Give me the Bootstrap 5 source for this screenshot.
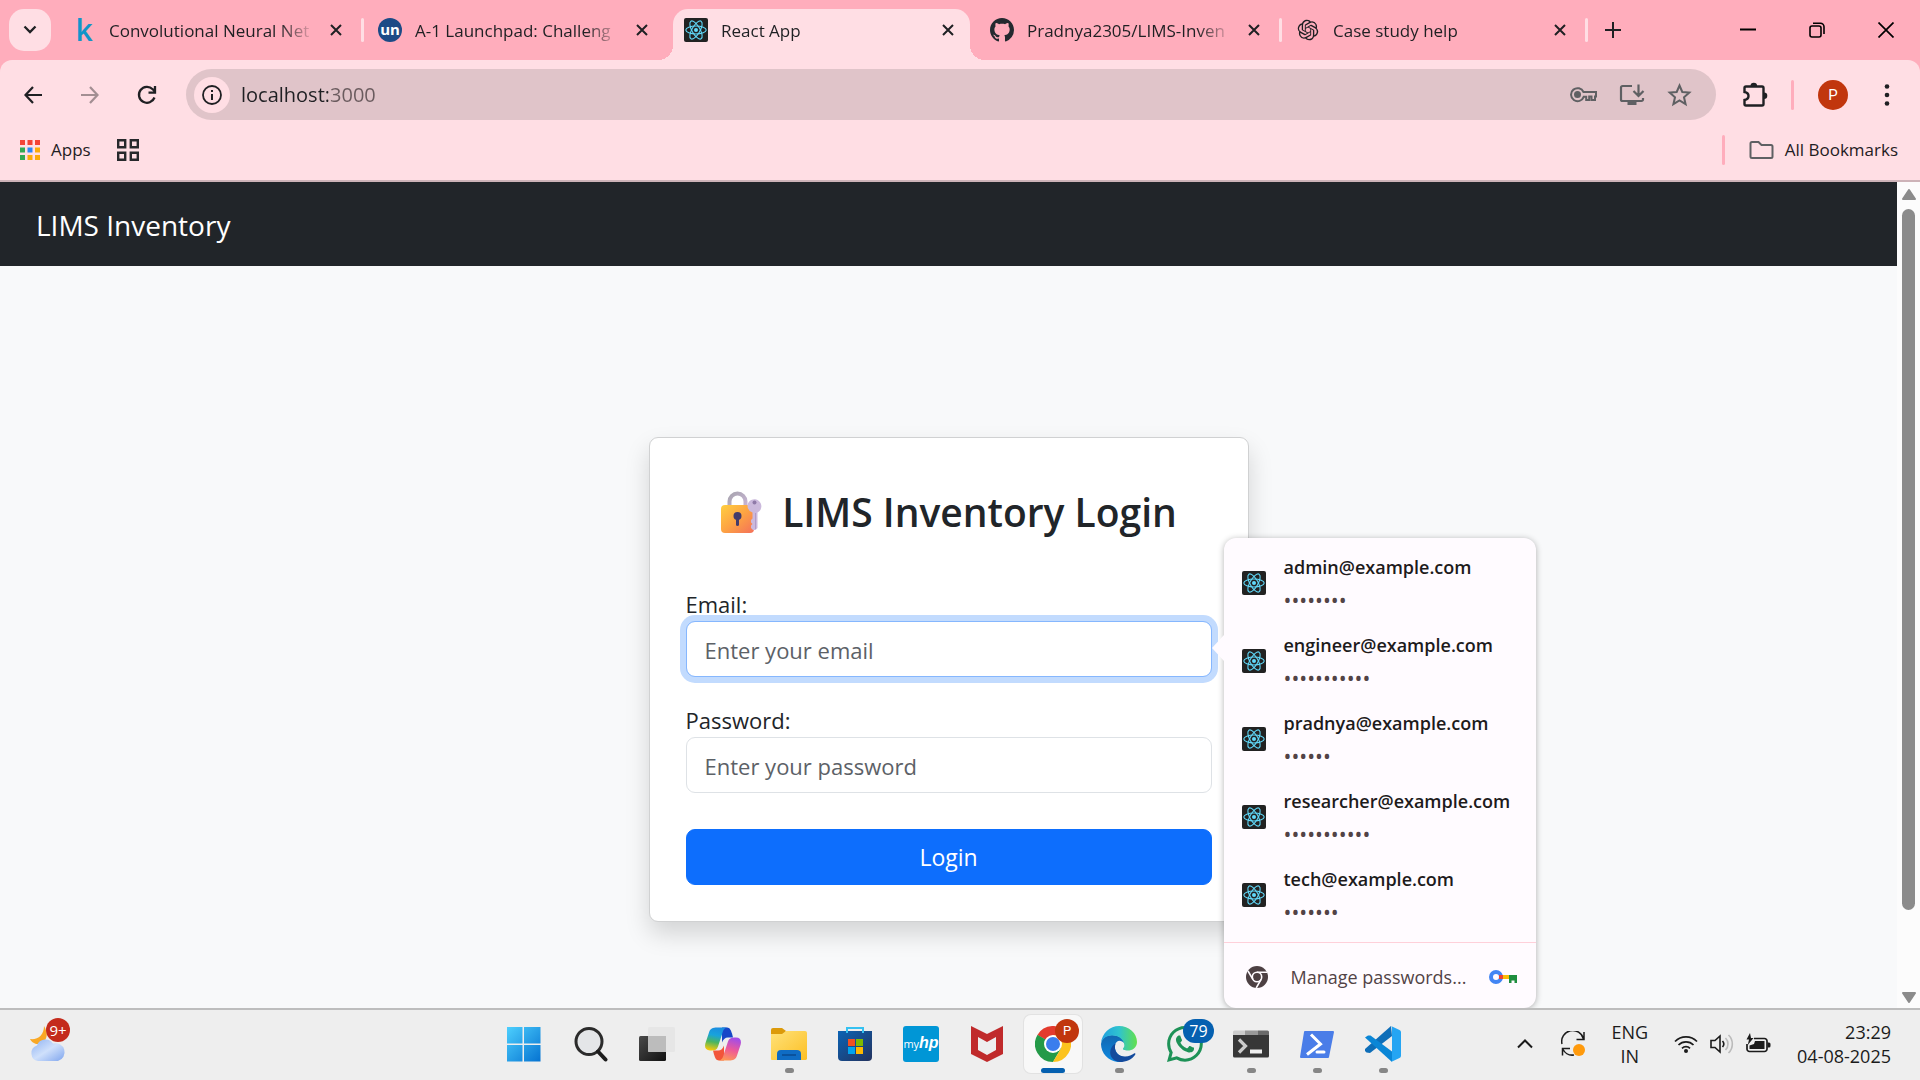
<!DOCTYPE html>
<html lang="en">
<head>
<meta charset="utf-8">
<meta name="viewport" content="width=device-width, initial-scale=1">
<title>React App</title>
<link href="https://cdn.jsdelivr.net/npm/bootstrap@5.3.0/dist/css/bootstrap.min.css" rel="stylesheet">
<style>
  :root { --strip:#ffadbc; --bar:#ffdee4; --omni:#e0c4c9; --ink:#1f2023; }
  body { font-family:"Open Sans","Noto Sans",sans-serif; font-size:17px; line-height:24px; color:var(--ink); }
  svg { display:block; flex:none; }
  .plain { border:0; background:none; padding:0; color:inherit; display:flex; align-items:center; justify-content:center; flex:none; }
  .screen { height:100vh; overflow:hidden; }

  /* tab strip */
  .strip { background:var(--strip); height:60px; }
  .tab-list-btn { width:42px; height:42px; border-radius:15px; background:var(--bar); margin:9px 6px 9px 9px; }
  .tab-slot { width:306px; padding:0 15px; gap:13px; position:relative; }
  .tab-slot > * { position:relative; z-index:1; }
  .tab-slot.ruled::after { content:""; position:absolute; right:-1px; top:18px; width:3px; height:24px; background:var(--bar); border-radius:2px; }
  .tab-title { width:202px; white-space:nowrap; color:inherit; text-decoration:none; padding-top:2px;
    -webkit-mask-image:linear-gradient(90deg,#000 170px,transparent 206px); mask-image:linear-gradient(90deg,#000 170px,transparent 206px); }
  .fav { width:24px; height:24px; flex:none; }
  .fav-k { color:#1295c9; font:600 30px/24px "Open Sans",sans-serif; text-align:center; }
  .fav-un { background:#1c4a86; color:#fff; border-radius:50%; font:700 15px/22px "Open Sans",sans-serif; text-align:center; }
  .tab-face { position:absolute !important; z-index:0 !important; left:4px; right:5px; top:9px; bottom:0; background:var(--bar); border-radius:15px 15px 0 0; }
  .tab-face::before, .tab-face::after { content:""; position:absolute; bottom:0; width:15px; height:15px; }
  .tab-face::before { left:-15px; background:radial-gradient(circle at 0 0,transparent 15px,var(--bar) 15px); }
  .tab-face::after { right:-15px; background:radial-gradient(circle at 100% 0,transparent 15px,var(--bar) 15px); }
  .tab-slot .plain { margin-left:2px; width:24px; height:24px; }
  .win-btn { width:69px; height:60px; }

  /* toolbar and bookmarks */
  .under { background:var(--strip); }
  .tools { background:var(--bar); border-radius:12px 12px 0 0; padding:9px 15px 0; gap:21px; }
  .tool { width:36px; height:36px; }
  .tool-s { width:30px; height:30px; }
  .omnibox { background:var(--omni); border-radius:26px; height:51px; padding:0 23px 0 8px; gap:21px; margin-right:3px; }
  .site-info { width:36px; height:36px; border-radius:50%; background:var(--bar); }
  .url { border:0; outline:0; padding:0; margin-left:-10px; font-size:20px; line-height:30px; min-width:0;
    -webkit-text-fill-color:transparent; background:linear-gradient(90deg,#1f2023 87px,#6a5b5e 87px); -webkit-background-clip:text; background-clip:text; }
  .rule { width:3px; height:30px; border-radius:2px; background:var(--strip); margin:0 3px 0 0; }
  .avatar { width:30px; height:36px; border-radius:50%; }
  .avatar span { width:30px; height:30px; border-radius:50%; background:#c1360d; color:#fff; font:15px/30px Roboto,sans-serif; }
  .marks { background:var(--bar); height:62px; border-bottom:2px solid #cdb3b8; padding:0 22px 0 20px; }
  .marks a { color:inherit; text-decoration:none; gap:11px; }
  .marks .groups { margin-left:26px; }

  /* page */
  .page-bg { background:#f8f9fa; }
  .site-nav { height:84px; padding:0 36px; }
  .site-nav .navbar-brand { font-size:28px; line-height:45px; padding:2px 0 0; margin:0; }
  .stage { padding-top:171px; }
  .login-card { width:600px; border-color:#d0d1d2; border-radius:9px; box-shadow:0 12px 24px rgba(0,0,0,.15); }
  .login-card .card-body { padding:36px; }
  .login-title { font-size:39px; line-height:51px; font-weight:600; margin:12px 0 48px; gap:20px; color:#212529; }
  .login-card label { font-size:22px; line-height:36px; display:block; color:#212529; padding-top:1px; height:36px; }
  .field { position:relative; margin-bottom:24px; }
  .field .form-control { height:56px; font-size:22px; line-height:36px; padding:10px 18px 8px; border-radius:9px; }
  .field .form-control::placeholder { color:#5c6167; }
  .form-control.is-focused { border-color:#86b7fe; box-shadow:0 0 0 6px #c2dbfe; }
  .login-btn { height:56px; font-size:23px; border-radius:9px; margin-top:12px; background:#0d6efd; }

  /* saved password menu */
  .saved { position:absolute; left:calc(100% + 12px); top:-47px; width:312px; height:470px; background:#fffbff; border-radius:12px; z-index:5; box-shadow:0 1px 6px rgba(0,0,0,.3); padding-top:6px; }
  .saved::before { content:""; position:absolute; left:-12px; top:97px; border:13px solid transparent; border-left:0; border-right:12px solid #fffbff; }
  .saved-item { height:78px; padding:0 18px; gap:18px; width:100%; justify-content:flex-start; text-align:left; }
  .saved-item b { font-weight:600; font-size:18px; line-height:30px; display:block; color:#201a1b; }
  .saved-item span { display:block; font:21px/32px "Open Sans",sans-serif; color:#524346; padding-top:2px; height:32px; }
  .saved-foot { border-top:1px solid #ffd0da; height:66px; margin-top:8px; padding:2px 19px 0 22px; width:100%; font-size:18px; color:#524346; }
  .saved-foot .plain { gap:23px; }

  /* scrollbar */
  .sbar { width:23px; background:#fcfcfc; padding:7px 5px 5px; gap:9px; }
  .thumb { width:13px; background:#8b8b8b; border-radius:7px; height:701px; }

  /* taskbar */
  .taskbar { height:72px; background:#eee; border-top:2px solid #bdbdbd; display:grid; grid-template-columns:1fr auto 1fr; align-items:center; padding:0 12px 2px 0; color:#1b1b1b; }
  .task { position:relative; width:58px; height:58px; margin:0 4px; border-radius:7px; }
  .task.open::after { content:""; position:absolute; bottom:0; left:25px; width:9px; height:5px; border-radius:3px; background:#868686; }
  .task.current { background:#f8f8f8; box-shadow:0 0 0 1px #e2e2e2; }
  .task.current::after { left:17px; width:24px; background:#0560b0; }
  .pip { position:absolute; display:block; height:24px; border-radius:12px; color:#fff; text-align:center; font-size:15px; line-height:24px; }
  .pip-chrome { left:31px; top:4px; width:24px; background:#c1360d; font-family:Roboto,sans-serif; font-size:13px; }
  .pip-chat { left:27px; top:4px; width:31px; background:#0560b0; font-size:16px; }
  .pip-news { left:18px; top:-8px; width:24px; background:#c42b1c; }
  .weather { position:relative; margin-left:28px; width:42px; height:36px; }
  .hp-tile { width:36px; height:36px; border-radius:3px; background:#0096d6; color:#fff; font:11px/34px "Open Sans",sans-serif; }
  .hp-tile b { font:italic 700 16px/34px "Liberation Sans",sans-serif; }
  .tray { gap:26px; padding-right:17px; font-size:18px; line-height:24px; }
  .tray-icons { gap:12px; }
</style>
<script src="https://cdn.jsdelivr.net/npm/bootstrap@5.3.0/dist/js/bootstrap.bundle.min.js"></script>
</head>
<body>
<svg width="0" height="0" class="position-absolute" aria-hidden="true">
  <symbol id="react" viewBox="0 0 24 24"><rect width="24" height="24" rx="2" fill="#222"/><g fill="none" stroke="#61dafb" stroke-width="1.1"><ellipse cx="12" cy="12" rx="10.2" ry="4"/><ellipse cx="12" cy="12" rx="10.2" ry="4" transform="rotate(60 12 12)"/><ellipse cx="12" cy="12" rx="10.2" ry="4" transform="rotate(120 12 12)"/></g><circle cx="12" cy="12" r="2" fill="#61dafb"/></symbol>
  <symbol id="cross" viewBox="0 0 12 12"><path d="M1 1l10 10M11 1L1 11" stroke="currentColor" stroke-width="2" fill="none"/></symbol>
  <linearGradient id="gWin" x1="0" y1="0" x2="36" y2="36" gradientUnits="userSpaceOnUse"><stop stop-color="#4fd2ff"/><stop offset="1" stop-color="#0370d0"/></linearGradient>
</svg>

<div class="screen d-flex flex-column">
  <header class="flex-shrink-0">
    <div class="strip d-flex">
      <button class="plain tab-list-btn" aria-label="Search tabs"><svg width="14" height="10" viewBox="0 0 14 10"><path d="M1.5 1.500l5.500 5.500 5.500-5.500" fill="none" stroke="currentColor" stroke-width="2.300"/></svg></button>
      <div class="tab-slot d-flex align-items-center ruled"><span class="fav fav-k">k</span><a href="#" class="tab-title">Convolutional Neural Net</a><button class="plain" aria-label="Close tab"><svg width="12" height="12"><use href="#cross"/></svg></button></div>
      <div class="tab-slot d-flex align-items-center"><span class="fav fav-un">un</span><a href="#" class="tab-title">A-1 Launchpad: Challeng</a><button class="plain" aria-label="Close tab"><svg width="12" height="12"><use href="#cross"/></svg></button></div>
      <div class="tab-slot d-flex align-items-center"><i class="tab-face"></i><svg class="fav"><use href="#react"/></svg><a href="#" class="tab-title">React App</a><button class="plain" aria-label="Close tab"><svg width="12" height="12"><use href="#cross"/></svg></button></div>
      <div class="tab-slot d-flex align-items-center ruled"><svg class="fav" viewBox="0 0 16 16"><path fill="#24292f" d="M8 0C3.580 0 0 3.580 0 8c0 3.540 2.290 6.530 5.470 7.590.4.070.55-.17.55-.38 0-.19-.01-.82-.01-1.490-2.010.37-2.530-.49-2.690-.94-.09-.23-.48-.94-.82-1.130-.28-.15-.68-.52-.01-.53.63-.01 1.080.58 1.230.82.72 1.210 1.870.87 2.330.66.070-.52.28-.87.51-1.070-1.780-.2-3.640-.89-3.640-3.950 0-.87.31-1.590.82-2.150-.08-.2-.36-1.020.08-2.120 0 0 .67-.21 2.200.82.64-.18 1.320-.27 2-.27s1.360.09 2 .27c1.530-1.040 2.200-.82 2.200-.82.44 1.100.16 1.920.08 2.120.51.56.82 1.270.82 2.150 0 3.070-1.870 3.750-3.650 3.950.29.25.54.73.54 1.480 0 1.070-.01 1.930-.01 2.200 0 .21.15.46.55.38A8.010 8.010 0 0 0 16 8c0-4.420-3.580-8-8-8"/></svg><a href="#" class="tab-title">Pradnya2305/LIMS-Inven</a><button class="plain" aria-label="Close tab"><svg width="12" height="12"><use href="#cross"/></svg></button></div>
      <div class="tab-slot d-flex align-items-center ruled"><svg class="fav" viewBox="-2 -2 28 28"><path fill="#1f2023" d="M22.2819 9.8211a5.9847 5.9847 0 0 0-.5157-4.9108 6.0462 6.0462 0 0 0-6.5098-2.9A6.0651 6.0651 0 0 0 4.9807 4.1818a5.9847 5.9847 0 0 0-3.9977 2.9 6.0462 6.0462 0 0 0 .7427 7.0966 5.98 5.98 0 0 0 .511 4.9107 6.051 6.051 0 0 0 6.5146 2.9001A5.9847 5.9847 0 0 0 13.2599 24a6.0557 6.0557 0 0 0 5.7718-4.2058 5.9894 5.9894 0 0 0 3.9977-2.9001 6.0557 6.0557 0 0 0-.7475-7.0729zm-9.022 12.6081a4.4755 4.4755 0 0 1-2.8764-1.0408l.1419-.0804 4.7783-2.7582a.7948.7948 0 0 0 .3927-.6813v-6.7369l2.02 1.1686a.071.071 0 0 1 .038.052v5.5826a4.504 4.504 0 0 1-4.4945 4.4944zm-9.6607-4.1254a4.4708 4.4708 0 0 1-.5346-3.0137l.142.0852 4.783 2.7582a.7712.7712 0 0 0 .7806 0l5.8428-3.3685v2.3324a.0804.0804 0 0 1-.0332.0615L9.74 19.9502a4.4992 4.4992 0 0 1-6.1408-1.6464zM2.3408 7.8956a4.485 4.485 0 0 1 2.3655-1.9728V11.6a.7664.7664 0 0 0 .3879.6765l5.8144 3.3543-2.0201 1.1685a.0757.0757 0 0 1-.071 0l-4.8303-2.7865A4.504 4.504 0 0 1 2.3408 7.872zm16.5963 3.8558L13.1038 8.364 15.1192 7.2a.0757.0757 0 0 1 .071 0l4.8303 2.7913a4.4944 4.4944 0 0 1-.6765 8.1042v-5.6772a.79.79 0 0 0-.407-.667zm2.0107-3.0231l-.142-.0852-4.7735-2.7818a.7759.7759 0 0 0-.7854 0L9.409 9.2297V6.8974a.0662.0662 0 0 1 .0284-.0615l4.8303-2.7866a4.4992 4.4992 0 0 1 6.6802 4.66zM8.3065 12.863l-2.02-1.1638a.0804.0804 0 0 1-.038-.0567V6.0742a4.4992 4.4992 0 0 1 7.3757-3.4537l-.142.0805L8.704 5.459a.7948.7948 0 0 0-.3927.6813zm1.0976-2.3654l2.602-1.4998 2.6069 1.4998v2.9994l-2.5974 1.4997-2.6067-1.4997Z"/></svg><a href="#" class="tab-title">Case study help</a><button class="plain" aria-label="Close tab"><svg width="12" height="12"><use href="#cross"/></svg></button></div>
      <button class="plain px-3" aria-label="New tab"><svg width="20" height="16" viewBox="0 0 20 16"><path d="M10 0v16M2 8h16" stroke="currentColor" stroke-width="2"/></svg></button>
      <div class="d-flex ms-auto text-black">
        <button class="plain win-btn" aria-label="Minimise"><svg width="16" height="16" viewBox="0 0 16 16"><path d="M0 7.500h16" stroke="currentColor" stroke-width="2"/></svg></button>
        <button class="plain win-btn" aria-label="Restore"><svg width="16" height="16" viewBox="0 0 16 16" fill="none" stroke="currentColor" stroke-width="1.600"><rect x="1" y="4" width="11" height="11" rx="2"/><path d="M4 1.200h7.500a3.500 3.500 0 0 1 3.500 3.500V12"/></svg></button>
        <button class="plain win-btn" aria-label="Close"><svg width="16" height="16" viewBox="0 0 16 16"><path d="M.5.5l15 15M15.500.5l-15 15" stroke="currentColor" stroke-width="1.700"/></svg></button>
      </div>
    </div>

    <div class="under">
      <div class="tools d-flex align-items-center">
        <button class="plain tool" aria-label="Back"><svg width="18" height="18" viewBox="0 0 18 18" fill="none" stroke="currentColor" stroke-width="2.200"><path d="M18 9H1.500M9 1L1.500 9 9 17"/></svg></button>
        <button class="plain tool" aria-label="Forward"><svg width="18" height="18" viewBox="0 0 18 18" fill="none" stroke="#a38e92" stroke-width="2.200"><path d="M0 9h16.500M9 1l7.500 8L9 17"/></svg></button>
        <button class="plain tool" aria-label="Reload"><svg width="20" height="20" viewBox="0 0 20 20" fill="none" stroke="currentColor" stroke-width="2.300"><path d="M17.500 12.500A8 8 0 1 1 15.700 4.200L18 6.500M18 1v6.700h-6.500"/></svg></button>
        <div class="omnibox d-flex align-items-center flex-grow-1">
          <button class="plain site-info" aria-label="Site information"><svg width="20" height="20" viewBox="0 0 20 20"><circle cx="10" cy="10" r="9" fill="none" stroke="currentColor" stroke-width="1.800"/><path d="M10 9v6M10 5v2" stroke="currentColor" stroke-width="2"/></svg></button>
          <input class="url flex-grow-1" type="text" value="localhost:3000" aria-label="Address">
          <button class="plain" aria-label="Passwords"><svg width="27" height="20" viewBox="0 0 27 20" fill="none" stroke="#5f6063" stroke-width="2"><path d="M13.500 7H26v4.500h-1V15h-3.500v-3.500h-2.300V15h-3v-3.200H13.700A6.500 6.500 0 1 1 13.500 7z"/><circle cx="7.500" cy="9.500" r="2.500" fill="#5f6063"/></svg></button>
          <button class="plain" aria-label="Install app"><svg width="27" height="24" viewBox="0 0 27 24" fill="none" stroke="#5f6063" stroke-width="2.200"><path d="M14 3H4.500A1.500 1.500 0 0 0 3 4.500v12A1.500 1.500 0 0 0 4.500 18h19a1.500 1.500 0 0 0 1.500-1.500V15M20.500 1.500V13M15.500 8l5 5 5-5"/><path d="M9.500 18h9v4h-9z" fill="#5f6063" stroke="none"/></svg></button>
          <button class="plain" aria-label="Bookmark this tab"><svg width="27" height="24" viewBox="0 0 27 24"><path d="M13.500 2.500l2.800 6.500 7 .6-5.300 4.700 1.600 6.900-6.100-3.700-6.100 3.700L9 14.300 3.700 9.600l7-.6z" fill="none" stroke="#5f6063" stroke-width="2"/></svg></button>
        </div>
        <button class="plain tool-s" aria-label="Extensions"><svg width="28" height="28" viewBox="0 0 28 28"><path d="M5.500 5.500H21a1.500 1.500 0 0 1 1.500 1.500v16a1.500 1.500 0 0 1-1.500 1.500H5A1.500 1.500 0 0 1 3.500 23v-4c3-.5 4-2.200 4-4s-1-3.500-4-4V7A1.500 1.500 0 0 1 5 5.500z" fill="none" stroke="currentColor" stroke-width="2.400"/><path d="M9.500 5a3.300 3.300 0 0 1 6.600 0zM23 11.500a3.300 3.300 0 0 1 0 6.600z" fill="currentColor"/></svg></button>
        <span class="rule"></span>
        <button class="plain avatar" aria-label="Profile"><span>P</span></button>
        <button class="plain tool" aria-label="Menu"><svg width="6" height="22" viewBox="0 0 6 22" fill="currentColor"><circle cx="3" cy="2.500" r="2.300"/><circle cx="3" cy="11" r="2.300"/><circle cx="3" cy="19.500" r="2.300"/></svg></button>
      </div>
      <nav class="marks d-flex align-items-center">
        <a href="#" class="d-flex align-items-center"><svg width="20" height="20" viewBox="0 0 20 20"><g fill="#f44336"><path d="M0 0h5v5H0zM7.500 0h5v5h-5zM15 0h5v5h-5z"/></g><g fill="#34a853"><path d="M0 7.500h5v5H0zM0 15h5v5H0z"/></g><path fill="#2b87f5" d="M7.500 7.500h5v5h-5z"/><path fill="#fbab08" d="M15 7.500h5v5h-5zM7.500 15h5v5h-5zM15 15h5v5h-5z"/></svg>Apps</a>
        <a href="#" class="groups" aria-label="Tab groups"><svg width="22" height="22" viewBox="0 0 22 22" fill="none" stroke="#27282b" stroke-width="2.400"><path d="M1.200 1.200h7v7h-7zM13.800 1.200h7v7h-7zM1.200 13.800h7v7h-7zM13.800 13.800h7v7h-7z"/></svg></a>
        <span class="rule ms-auto me-4"></span>
        <a href="#" class="d-flex align-items-center"><svg width="25" height="20" viewBox="0 0 25 20"><path d="M3 2h6.500l3 3H22a1.500 1.500 0 0 1 1.500 1.500v10A1.500 1.500 0 0 1 22 18H3a1.500 1.500 0 0 1-1.500-1.500v-13A1.500 1.500 0 0 1 3 2z" fill="none" stroke="#5f6063" stroke-width="2"/></svg>All Bookmarks</a>
      </nav>
    </div>
  </header>

  <div class="d-flex flex-grow-1 overflow-hidden page-bg">
    <div class="flex-grow-1">
      <nav class="navbar navbar-dark bg-dark site-nav"><a class="navbar-brand" href="#">LIMS Inventory</a></nav>
      <main class="stage d-flex justify-content-center">
        <div class="card login-card">
          <form class="card-body">
            <h3 class="login-title d-flex justify-content-center align-items-center">
              <svg width="42" height="42" viewBox="0 0 42 42" role="img" aria-label="Locked with key">
                <defs><linearGradient id="gLock" x1="0" y1="0" x2="1" y2="1"><stop stop-color="#ffcf3f"/><stop offset=".5" stop-color="#fda343"/><stop offset="1" stop-color="#f4705a"/></linearGradient><linearGradient id="gShk" x1="0" y1="0" x2="1" y2="1"><stop stop-color="#a9a5b0"/><stop offset="1" stop-color="#c9b5d6"/></linearGradient></defs>
                <path d="M9.500 17v-6.500a8 8 0 0 1 16 0V17" fill="none" stroke="url(#gShk)" stroke-width="4"/>
                <rect x="1" y="14" width="33" height="28" rx="4" fill="url(#gLock)"/>
                <circle cx="17.500" cy="25" r="4" fill="#433b6b"/><path d="M16 26h3v7.500a1.500 1.500 0 0 1-3 0z" fill="#433b6b"/>
                <path d="M27.500 14a7 7 0 1 1 10 7.500V37l-2 2h-2.500l-2-2v-2.500l1.500-1.500-1.500-1.500V29l1.500-1.500V21.500A7.500 7.500 0 0 1 27.500 14z" fill="#cbb9dc"/><circle cx="34.500" cy="11.500" r="2" fill="#8f7aa8"/><path d="M35.500 22v16" stroke="#b09cc8" stroke-width="1"/>
              </svg>
              <span>LIMS Inventory Login</span>
            </h3>
            <div class="field">
              <label for="email">Email:</label>
              <input id="email" type="email" class="form-control is-focused" placeholder="Enter your email">
              <div class="saved" role="listbox" aria-label="Saved passwords">
                <button type="button" class="plain saved-item"><svg class="fav"><use href="#react"/></svg><div><b>admin@example.com</b><span>••••••••</span></div></button>
                <button type="button" class="plain saved-item"><svg class="fav"><use href="#react"/></svg><div><b>engineer@example.com</b><span>•••••••••••</span></div></button>
                <button type="button" class="plain saved-item"><svg class="fav"><use href="#react"/></svg><div><b>pradnya@example.com</b><span>••••••</span></div></button>
                <button type="button" class="plain saved-item"><svg class="fav"><use href="#react"/></svg><div><b>researcher@example.com</b><span>•••••••••••</span></div></button>
                <button type="button" class="plain saved-item"><svg class="fav"><use href="#react"/></svg><div><b>tech@example.com</b><span>•••••••</span></div></button>
                <div class="saved-foot d-flex align-items-center justify-content-between">
                  <button type="button" class="plain"><svg width="22" height="22" viewBox="0 0 22 22"><circle cx="11" cy="11" r="11" fill="#4d4043"/><circle cx="11" cy="11" r="4.700" fill="none" stroke="#fffbff" stroke-width="1.600"/><path d="M11 6.300h10M6.900 13.300L2 5M15.100 13.300L10.200 22" stroke="#fffbff" stroke-width="1.600"/></svg>Manage passwords...</button>
                  <svg width="28" height="14" viewBox="0 0 28 14"><circle cx="7" cy="7" r="5" fill="none" stroke="#4285f4" stroke-width="4"/><path d="M10 5h4v4h-4z" fill="#ea4335"/><path d="M14 5h6v4h-6z" fill="#fbbc04"/><path d="M20 5h8v8h-2.500v-2.500h-3V13H20z" fill="#1e8e3e"/></svg>
                </div>
              </div>
            </div>
            <div class="field">
              <label for="password">Password:</label>
              <input id="password" type="password" class="form-control" placeholder="Enter your password">
            </div>
            <button type="button" class="btn btn-primary w-100 login-btn">Login</button>
          </form>
        </div>
      </main>
    </div>
    <div class="sbar d-flex flex-column flex-shrink-0" aria-hidden="true">
      <svg width="14" height="11" viewBox="0 0 14 11"><path d="M7 1l6 9H1z" fill="#8b8b8b" stroke="#8b8b8b" stroke-linejoin="round" stroke-width="2"/></svg>
      <div class="thumb"></div>
      <svg class="mt-auto" width="14" height="11" viewBox="0 0 14 11"><path d="M7 10l6-9H1z" fill="#8b8b8b" stroke="#8b8b8b" stroke-linejoin="round" stroke-width="2"/></svg>
    </div>
  </div>

  <footer class="taskbar flex-shrink-0">
    <button class="plain weather" aria-label="Widgets">
      <svg width="42" height="36" viewBox="0 0 42 36"><defs><linearGradient id="gCl" x1="0" y1="0" x2="1" y2="1"><stop stop-color="#8fb2f2"/><stop offset=".5" stop-color="#cfe0fb"/><stop offset="1" stop-color="#7fa5ee"/></linearGradient></defs><path d="M16 0c4 7 4 12-2 18H8c-3-1-5-3-6-5 8 1 14-4 14-13z" fill="#f9a825"/><path d="M10 35a8 8 0 0 1-1-15.500A9 9 0 0 1 25 17.500 9 9 0 0 1 30 35z" fill="url(#gCl)"/></svg>
      <span class="pip pip-news">9+</span>
    </button>
    <div class="d-flex">
      <button class="plain task" aria-label="Start"><svg width="36" height="36" viewBox="1 0 36 36"><path fill="url(#gWin)" d="M0 1h16.500v16.500H0zM18 1h16.500v16.500H18zM0 19h16.500v16.500H0zM18 19h16.500v16.500H18z"/></svg></button>
      <button class="plain task" aria-label="Search"><svg width="36" height="36" viewBox="0 0 36 36"><circle cx="16" cy="15.500" r="13" fill="#e4e6e8" stroke="#2b2b2b" stroke-width="3"/><path d="M25 25.500l7.500 8" stroke="#1d1d1d" stroke-width="4" stroke-linecap="round"/></svg></button>
      <button class="plain task" aria-label="Task view"><svg width="38" height="36" viewBox="0 0 38 36"><defs><linearGradient id="gTv" x1="0" y1="0" x2="1" y2="1"><stop stop-color="#4a4a4a"/><stop offset="1" stop-color="#111"/></linearGradient></defs><rect x="1" y="10" width="27" height="25" rx="1.500" fill="url(#gTv)"/><rect x="10" y="1" width="27" height="25" rx="1.500" fill="#e6e6e6"/><path d="M10 10h18v16H11.500a1.500 1.500 0 0 1-1.500-1.500z" fill="#bcbcbc"/></svg></button>
      <button class="plain task" aria-label="Copilot"><svg width="36" height="34" viewBox="0 0 36 33"><defs><linearGradient id="gC1" x1=".6" y1="0" x2=".4" y2="1"><stop stop-color="#1b8be0"/><stop offset=".35" stop-color="#18a3dc"/><stop offset=".65" stop-color="#4ab560"/><stop offset="1" stop-color="#f3c80c"/></linearGradient><linearGradient id="gC2" x1=".6" y1="0" x2=".3" y2="1"><stop stop-color="#a24de8"/><stop offset=".5" stop-color="#ee5a98"/><stop offset="1" stop-color="#ff9a52"/></linearGradient></defs><path d="M17 0h5c3 0 4 3 5 6l1 4h-5c-3 0-5 2-6 5z" fill="#1647c8"/><path d="M19 33h-5c-3 0-4-3-5-6l-1-4h5c3 0 5-2 6-5z" fill="#f2553a"/><path d="M12 0h11c-4 0-5 3-6 7l-4 12c-1 3-3 4-6 4H5c-5 0-6-4-4-9L4 5c1-4 4-5 8-5z" fill="url(#gC1)"/><path d="M24 33H13c4 0 5-3 6-7l4-12c1-3 3-4 6-4h2c5 0 6 4 4 9l-3 9c-1 4-4 5-8 5z" fill="url(#gC2)"/></svg></button>
      <button class="plain task open" aria-label="File Explorer"><svg width="36" height="36" viewBox="0 0 36 36"><defs><linearGradient id="gFe" x1="0" y1="0" x2="1" y2="1"><stop stop-color="#ffe27a"/><stop offset="1" stop-color="#fcbf24"/></linearGradient></defs><path d="M0 4a2 2 0 0 1 2-2h9l4 3-3 5H0z" fill="#dc9a0a"/><path d="M0 8h11l4-3h19a2 2 0 0 1 2 2v26a2 2 0 0 1-2 1H1a1 1 0 0 1-1-1z" fill="url(#gFe)"/><path d="M6 34V28a4 4 0 0 1 4-4h16a4 4 0 0 1 4 4v6z" fill="#0f6cc4"/><path d="M11 29h14" stroke="#0a4a90" stroke-width="1.500"/></svg></button>
      <button class="plain task" aria-label="Store"><svg width="36" height="36" viewBox="0 0 36 36"><defs><linearGradient id="gSt" x1="0" y1="0" x2="1" y2="1"><stop stop-color="#0b63b5"/><stop offset="1" stop-color="#23325e"/></linearGradient></defs><path d="M1 5h34v26a4 4 0 0 1-4 4H5a4 4 0 0 1-4-4z" fill="url(#gSt)"/><path d="M10 7V2h16v5" fill="none" stroke="#35c1f1" stroke-width="2"/><path d="M11 13h7v7h-7z" fill="#f25022"/><path d="M19 13h7v7h-7z" fill="#7fba00"/><path d="M11 21h7v7h-7z" fill="#00a4ef"/><path d="M19 21h7v7h-7z" fill="#ffb900"/></svg></button>
      <button class="plain task" aria-label="myHP"><span class="hp-tile">my<b>hp</b></span></button>
      <button class="plain task" aria-label="McAfee"><svg width="36" height="36" viewBox="0 0 36 36"><path d="M2 0l16 8 16-8v28l-16 8-16-8zM9 11v13l9 5 9-5V11l-9 5z" fill="#c02a2b" fill-rule="evenodd"/></svg></button>
      <button class="plain task open current" aria-label="Chrome"><svg width="36" height="36" viewBox="0 0 36 36"><path d="M18 18L2.400 9A18 18 0 0 1 33.600 9z" fill="#e33b2e"/><path d="M18 18L2.400 9A18 18 0 0 0 18 36l8-13.500z" fill="#249a48"/><path d="M18 36A18 18 0 0 0 33.600 9H18l8 13.500z" fill="#fcc31e"/><path d="M10 22.500L2.400 9 18 18z" fill="#249a48"/><circle cx="18" cy="18" r="9" fill="#fff"/><circle cx="18" cy="18" r="7" fill="#3b7ded"/></svg><span class="pip pip-chrome">P</span></button>
      <button class="plain task open" aria-label="Edge"><svg width="36" height="36" viewBox="0 0 36 36"><defs><linearGradient id="gE1"><stop stop-color="#1f9fe0"/><stop offset=".5" stop-color="#2fc3cf"/><stop offset="1" stop-color="#62e04c"/></linearGradient><linearGradient id="gE2" x1="0" y1="0" x2="0" y2="1"><stop stop-color="#1266b0"/><stop offset="1" stop-color="#0d8ae2"/></linearGradient></defs><path d="M0 18c1-6 5-9 11-9 7 0 12 4 12.500 8.500C20 13 15 14 14 19c-1 7 4 12 12 12.500L20 36C9 37 0 28 0 18z" fill="url(#gE2)"/><path d="M0 17C1 7 9 0 18 0c10 0 18 7 18 16 0 6-5 8.500-9 8.500-4 0-5.500-1-5-2 1.500-1.500 1.500-3 1-5-1-4.500-5.500-8-12-8C5.500 9.500 1.500 12.500 0 17z" fill="url(#gE1)"/><path d="M14.500 17.500C12 26 18 30.500 24 30.500c4 0 7-1.500 9-3 1-.5 2 .1 1 1.500C31 33.500 25 36 19 36c-7-.5-11-6-9.500-12 1-3.500 3-5.500 5-6.500z" fill="#134a9c"/></svg></button>
      <button class="plain task" aria-label="WhatsApp"><svg width="36" height="36" viewBox="0 0 16 16"><path fill="#1d9257" d="M13.601 2.326A7.850 7.850 0 0 0 7.994 0C3.627 0 .068 3.558.064 7.926c0 1.399.366 2.760 1.057 3.965L0 16l4.204-1.102a7.900 7.900 0 0 0 3.790.965h.004c4.368 0 7.926-3.558 7.930-7.930A7.900 7.900 0 0 0 13.600 2.326zM7.994 14.521a6.600 6.600 0 0 1-3.356-.92l-.24-.144-2.494.654.666-2.433-.156-.251a6.560 6.560 0 0 1-1.007-3.505c0-3.626 2.957-6.584 6.591-6.584a6.560 6.560 0 0 1 4.660 1.931 6.560 6.560 0 0 1 1.928 4.660c-.004 3.639-2.961 6.592-6.592 6.592m3.615-4.934c-.197-.099-1.170-.578-1.353-.646-.182-.065-.315-.099-.445.099-.133.197-.513.646-.627.775-.114.133-.232.148-.43.05-.197-.1-.836-.308-1.592-.985-.59-.525-.985-1.175-1.103-1.372-.114-.198-.011-.304.088-.403.087-.088.197-.232.296-.346.1-.114.133-.198.198-.33.065-.134.034-.248-.015-.347-.05-.099-.445-1.076-.612-1.470-.16-.389-.323-.335-.445-.34-.114-.007-.247-.007-.38-.007a.73.73 0 0 0-.529.247c-.182.198-.691.677-.691 1.654s.71 1.916.81 2.049c.098.133 1.394 2.132 3.383 2.992.47.205.84.326 1.129.418.475.152.904.129 1.246.08.38-.058 1.171-.48 1.338-.943.164-.464.164-.86.114-.986-.049-.133-.182-.18-.379-.28"/></svg><span class="pip pip-chat">79</span></button>
      <button class="plain task open" aria-label="Terminal"><svg width="36" height="36" viewBox="0 0 36 36"><path d="M0 9h36v21a1.500 1.500 0 0 1-1.500 1.500h-33A1.500 1.500 0 0 1 0 30z" fill="#373737"/><path d="M0 9V6a1.500 1.500 0 0 1 1.500-1.500H12V9z" fill="#ccc"/><path d="M12 4.500h13V9H12z" fill="#999"/><path d="M25 4.500h9.500A1.500 1.500 0 0 1 36 6v3H25z" fill="#6a6a6a"/><path d="M6 13.500l6.500 6.500L6 26.500" fill="none" stroke="#ccc" stroke-width="3.200"/><path d="M17 23.500h12v4H17z" fill="#eee"/></svg></button>
      <button class="plain task open" aria-label="PowerShell"><svg width="36" height="36" viewBox="0 0 36 36"><path d="M6 5h28a1 1 0 0 1 1 1l-5 25a1 1 0 0 1-1 1H2a1 1 0 0 1-1-1L5 6a1 1 0 0 1 1-1z" fill="#4a7de8"/><path d="M12 8.500l9.500 9.500L8 28.500" fill="none" stroke="#fff" stroke-width="3"/><path d="M18 26h7" stroke="#fff" stroke-width="3" stroke-linecap="round"/></svg></button>
      <button class="plain task open" aria-label="Visual Studio Code"><svg width="36" height="36" viewBox="0 0 36 36"><path d="M27 10L5 27l-3.500-.5L0 25v-2L26 0z" fill="#0e6eb8"/><path d="M0 11.500l3-2h2.500L27 25.500V36z" fill="#0a86d6"/><path d="M26 0l8.500 4A2.500 2.500 0 0 1 36 6v24a2.500 2.500 0 0 1-1.500 2L26 36c1 0 1-1 1-2V2c0-1-.5-2-1-2z" fill="#25a5f3"/></svg></button>
    </div>
    <div class="tray d-flex align-items-center justify-content-end">
      <svg width="20" height="20" viewBox="0 0 20 20"><path d="M3 13.500l7-7 7 7" fill="none" stroke="#1b1b1b" stroke-width="2"/></svg>
      <svg width="24" height="26" viewBox="0 0 24 26" fill="none" stroke="#1b1b1b" stroke-width="1.500"><path d="M1 13A11 11 0 0 1 22.500 8M23 1v7.500h-7.500M1.500 24.500V17.500H9M2 18.500A11 11 0 0 0 13 24"/><circle cx="18" cy="19" r="6" fill="#ff9a0c" stroke="none"/></svg>
      <div class="text-center">ENG<br>IN</div>
      <div class="tray-icons d-flex align-items-center">
        <svg width="24" height="20" viewBox="0 0 24 20" fill="none" stroke="#1b1b1b" stroke-width="1.700"><path d="M1 7.500a15.500 15.500 0 0 1 22 0M4.500 11a10.500 10.500 0 0 1 15 0M8 14.300a5.600 5.600 0 0 1 8 0"/><circle cx="12" cy="17" r="2" fill="#1b1b1b" stroke="none"/></svg>
        <svg width="24" height="22" viewBox="0 0 24 22" fill="none" stroke="#1b1b1b" stroke-width="1.600"><path d="M1 7.500h4L10 3v16l-5-4.500H1z"/><path d="M12.500 8a4.500 4.500 0 0 1 0 6"/><path d="M15.500 5a8.500 8.500 0 0 1 0 12M18.500 2a12.500 12.500 0 0 1 0 18" stroke="#bbb"/></svg>
        <svg width="25" height="22" viewBox="0 0 25 22"><path d="M8 5.500h10.500A2.500 2.500 0 0 1 21 8v8a2.500 2.500 0 0 1-2.500 2.500h-15A2.500 2.500 0 0 1 1 16v-5" fill="none" stroke="#1b1b1b" stroke-width="1.700"/><path d="M9 8h9.500v8H3.500v-3.500L8 11zM21.500 9.500H23a1.500 1.500 0 0 1 1.500 1.500v2a1.500 1.500 0 0 1-1.500 1.500h-1.500zM4 0L.5 6.500h2.500L1.800 12 7.500 5H5z" fill="#1b1b1b"/></svg>
      </div>
      <div class="text-end">23:29<br>04-08-2025</div>
    </div>
  </footer>
</div>
</body>
</html>
